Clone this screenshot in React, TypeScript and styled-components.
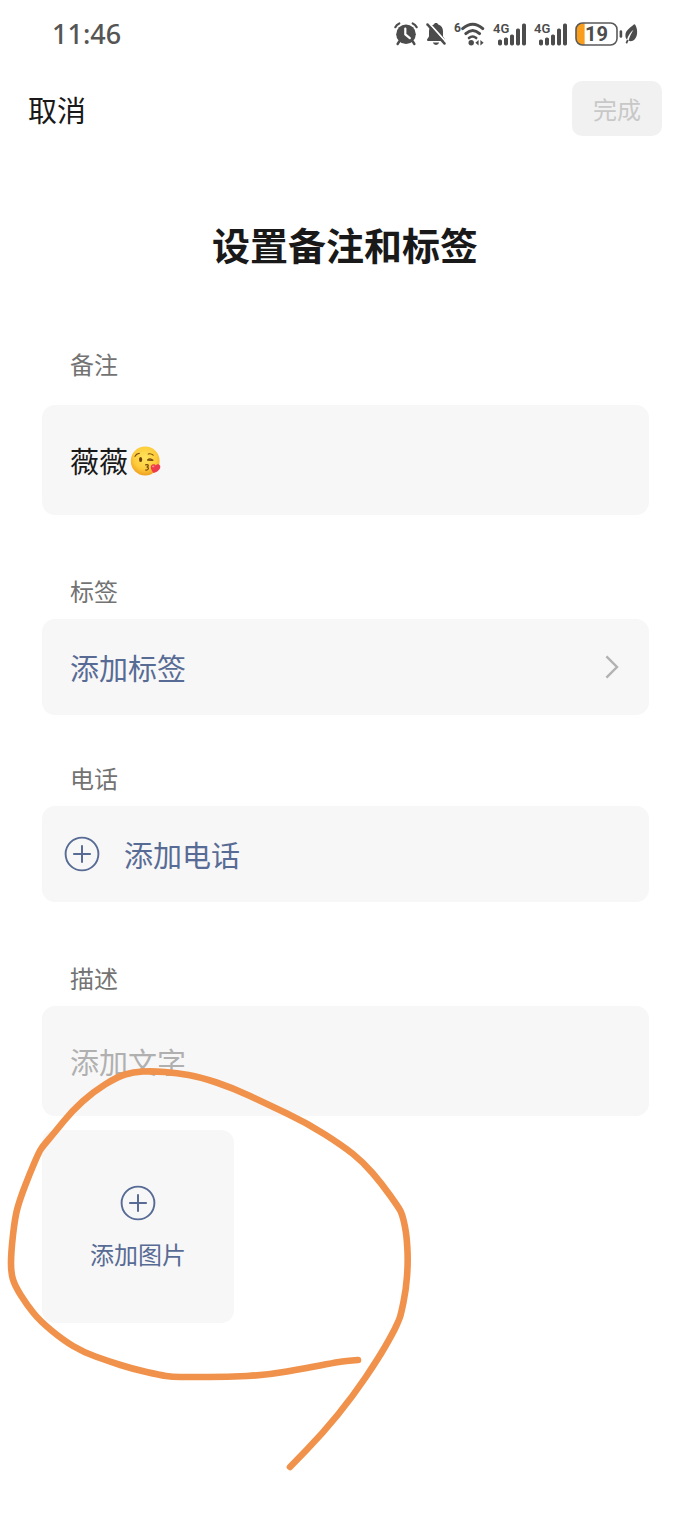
import React, { useState } from 'react';
import styled, { createGlobalStyle } from 'styled-components';

const GlobalStyle = createGlobalStyle`
  *, *::before, *::after { box-sizing: border-box; }
  body { margin: 0; background: #fff; }
  button, input { font: inherit; color: inherit; }
`;

const ink = '#4c4c4c';
const blue = '#576b95';

const Page = styled.div`
  position: relative;
  min-height: 100vh;
  overflow: hidden;
  background: #fff;
  color: #191919;
  font-family: 'Noto Sans CJK SC', sans-serif;
  font-size: 29px;
  line-height: 40px;
`;

const StatusBar = styled.div`
  display: flex;
  align-items: center;
  justify-content: space-between;
  height: 68px;
  padding: 0 52px;
  color: #555;
`;

const Clock = styled.time`
  font-family: 'Noto Sans', sans-serif;
  font-size: 27px;
  font-weight: 500;
`;

const StatusIcons = styled.div`
  display: flex;
  align-items: center;
  gap: 8px;

  svg { display: block; overflow: visible; }
`;

const Power = styled.div`
  display: flex;
  align-items: center;
  gap: 1px;
`;

const NavBar = styled.header`
  display: flex;
  align-items: center;
  justify-content: space-between;
  padding: 13px 28px;
`;

const CancelButton = styled.button`
  padding: 0;
  border: 0;
  background: none;
`;

const DoneButton = styled.button`
  width: 90px;
  height: 55px;
  padding: 0;
  border: 0;
  border-radius: 10px;
  background: #f1f1f1;
  color: #c8c8c8;
  font-size: 24px;
`;

const Title = styled.h1`
  margin: 67px 0 74px;
  font-size: 38px;
  font-weight: 700;
  line-height: 56px;
  text-align: center;
`;

const Form = styled.form`
  padding: 0 41px 0 42px;
`;

const Group = styled.section<{ $after?: number }>`
  margin-bottom: ${(p) => p.$after ?? 0}px;
`;

const Label = styled.label<{ $gap?: number }>`
  display: block;
  margin: 0 28px ${(p) => p.$gap ?? 10}px;
  color: #737373;
  font-size: 24px;
  line-height: 36px;
`;

const Field = styled.div`
  display: flex;
  align-items: center;
  gap: 2px;
  height: 110px;
  padding: 0 28px;
  border-radius: 13px;
  background: #f7f7f7;
`;

const TextInput = styled.input<{ $fit?: boolean }>`
  ${(p) => (p.$fit ? 'field-sizing: content;' : 'flex: 1; min-width: 0;')}
  height: 44px;
  padding: 0;
  border: 0;
  outline: 0;
  background: none;

  &::placeholder { color: #b0b0b0; opacity: 1; }
`;

const RowButton = styled.button<{ $split?: boolean }>`
  display: flex;
  align-items: center;
  justify-content: ${(p) => (p.$split ? 'space-between' : 'flex-start')};
  gap: 24px;
  width: 100%;
  height: 96px;
  padding: ${(p) => (p.$split ? '0 28px' : '0 22px')};
  border: 0;
  border-radius: 13px;
  background: #f7f7f7;
  color: ${blue};
`;

const ImageTile = styled.button`
  display: flex;
  flex-direction: column;
  align-items: center;
  justify-content: center;
  gap: 15px;
  width: 192px;
  height: 193px;
  margin-top: 14px;
  padding: 4px 0 0;
  border: 0;
  border-radius: 13px;
  background: #f7f7f7;
  color: ${blue};
  font-size: 24px;
  line-height: 36px;
`;

const Ink = styled.svg`
  position: absolute;
  top: 0;
  left: 0;
  pointer-events: none;
`;

const AlarmIcon = () => (
  <svg width="24" height="24" viewBox="0 0 24 24" fill="none" strokeLinecap="round">
    <path d="M1.3 5.2Q2.6 2.5 5.3 1.4M22.7 5.2Q21.4 2.5 18.7 1.4" stroke={ink} strokeWidth="2.2" />
    <path d="M5.2 19.5L3.6 22M18.8 19.5L20.4 22" stroke={ink} strokeWidth="2.4" />
    <circle cx="12" cy="12.2" r="9.8" fill={ink} />
    <path d="M11.3 6.6V12.4L15.8 16.2" stroke="#fff" strokeWidth="2.2" strokeLinejoin="round" />
  </svg>
);

const MutedBellIcon = () => (
  <svg width="20" height="24" viewBox="0 0 20 24" fill="none" strokeLinecap="round">
    <path
      d="M10 1C11.2 1 12 1.7 12.2 2.6C15.4 3.6 17 6.2 17 9.3V14.5L19 17.5Q19.3 19 17.8 19H2.2Q.7 19 1 17.5L3 14.5V9.3C3 6.2 4.6 3.6 7.8 2.6C8 1.7 8.8 1 10 1Z"
      fill={ink}
    />
    <path d="M6.8 20.6H13.2Q12.4 23 10 23Q7.6 23 6.8 20.6Z" fill={ink} />
    <path d="M3.2 1.4L20.4 20.4" stroke="#fff" strokeWidth="2" />
    <path d="M1.4 2.4L18.6 21.6" stroke={ink} strokeWidth="2.4" />
  </svg>
);

const WifiIcon = () => (
  <svg width="31" height="26" viewBox="0 0 31 26" fill="none" strokeLinecap="round">
    <text x="0" y="11" fill={ink} fontFamily="Roboto, sans-serif" fontSize="12" fontWeight="700">6</text>
    <path d="M8.6 7.6Q18.7 -1.2 28.8 7.6" stroke={ink} strokeWidth="3" />
    <path d="M11.8 12.6Q18.7 6.4 25.6 12.6" stroke={ink} strokeWidth="3" />
    <path d="M15 17Q18.6 14 22.2 17" stroke={ink} strokeWidth="2.6" />
    <circle cx="17.2" cy="21.8" r="2.7" fill={ink} />
    <path d="M24.6 19V24.6L21.4 21.8ZM26.4 19V24.6L29.6 21.8Z" fill={ink} />
  </svg>
);

const SignalIcon = () => (
  <svg width="33" height="24" viewBox="0 0 33 24">
    <text x="0" y="10.5" fill={ink} fontFamily="Roboto, sans-serif" fontSize="13" fontWeight="600">4G</text>
    {[17.4, 15.4, 12.4, 6.6, 1.6].map((top, i) => (
      <rect key={top} x={5 + i * 6} y={top} width="4" height={23.4 - top} rx="1.6" fill={ink} />
    ))}
  </svg>
);

const BatteryIcon = () => (
  <svg width="48" height="24" viewBox="0 0 48 24">
    <path d="M9.6 1V23H7.5Q1 23 1 16.5V7.5Q1 1 7.5 1Z" fill="#f99d1c" />
    <rect x="1" y="1" width="41" height="22" rx="6.5" fill="none" stroke="#5a5a5a" strokeWidth="1.6" />
    <rect x="44.6" y="8.3" width="2.6" height="7.4" rx="1.3" fill={ink} />
    <text x="21.5" y="19" fill={ink} fontFamily="Roboto, sans-serif" fontSize="20" fontWeight="700" textAnchor="middle">19</text>
  </svg>
);

const LeafIcon = () => (
  <svg width="14" height="22" viewBox="0 0 14 22" fill={ink}>
    <path d="M9.8 1.6C6.4 5 1.4 7 1.4 12.4C1.4 14.2 2 15.6 3 16.6C4 12.6 6.4 9.4 9.4 6.8C7.6 10 5.6 13.2 4.6 17.6C6.4 18.6 9 18.2 10.8 16.2C14.4 12 13.4 5.4 11.2 1.8Q10.6 .8 9.8 1.6Z" />
    <path d="M3 16.6L4.6 17.6L3.2 20.4Q2.2 21 1.6 19.8Z" />
  </svg>
);

const PlusCircle = () => (
  <svg width="36" height="36" viewBox="0 0 36 36" fill="none" stroke={blue} aria-hidden="true">
    <circle cx="18" cy="18" r="16.4" strokeWidth="1.9" />
    <path d="M18 9.2V26.8M9.2 18H26.8" strokeWidth="2" />
  </svg>
);

const Chevron = () => (
  <svg width="16" height="24" viewBox="0 0 16 24" fill="none" aria-hidden="true">
    <path d="M1.4 1.4L12 12L1.4 22.6" stroke="#b2b2b2" strokeWidth="2.4" />
  </svg>
);

const KissEmoji = () => (
  <svg width="32" height="32" viewBox="0 0 32 32" role="img" aria-label="😘">
    <defs>
      <radialGradient id="face" cx="50%" cy="38%" r="62%">
        <stop offset="0" stopColor="#ffe45c" />
        <stop offset=".65" stopColor="#fdcb3b" />
        <stop offset="1" stopColor="#f0a01f" />
      </radialGradient>
    </defs>
    <circle cx="15.2" cy="17" r="14.4" fill="url(#face)" />
    <ellipse cx="10.6" cy="15.4" rx="1.6" ry="2.5" fill="#6b3d0c" />
    <g fill="none" stroke="#7a480f" strokeLinecap="round">
      <path d="M5 12.4Q6.2 9.6 9.4 9.2" strokeWidth="1.1" />
      <path d="M18.2 10Q21 9.2 23.2 11.2" strokeWidth="1.1" />
      <path d="M17.6 16Q20 13.6 23 16.2M18 16.2L22.4 16.4" strokeWidth="1.2" />
      <path d="M15.6 20.8C18.8 20 19.2 22.4 16.6 23C19.4 23.2 19 26.4 15.6 26" strokeWidth="1.2" />
    </g>
    <path
      d="M23.6 29C21.6 26.6 20 24.2 21 21.8C22 19.8 24.6 19.6 25.8 21.6C27 19.8 29.4 20 30.2 22C31 25 27.4 28 23.6 29Z"
      fill="#ed3b4b"
    />
    <ellipse cx="23.2" cy="22.4" rx="1.2" ry=".9" fill="#ff8590" />
  </svg>
);

const strokePoints: [number, number][] = [
  [358, 1360], [345, 1361], [333, 1363], [307, 1368], [267, 1375], [227, 1377], [190, 1377],
  [172, 1377], [160, 1375], [133, 1369], [108, 1361], [83, 1352], [63, 1340], [40, 1321],
  [27, 1305], [15, 1286], [11, 1273], [11, 1253], [15, 1217], [20, 1199], [30, 1173],
  [39, 1152], [43, 1146], [55, 1132], [72, 1111], [93, 1092], [117, 1077], [133, 1072],
  [153, 1071], [177, 1073], [200, 1077], [233, 1088], [267, 1104], [307, 1123], [343, 1146],
  [363, 1162], [382, 1184], [399, 1208], [402, 1214], [405, 1226], [407, 1240], [408, 1263],
  [406, 1290], [401, 1314], [399, 1320], [393, 1333], [378, 1359], [353, 1396], [323, 1433],
  [290, 1467],
];

// Joins the points through their midpoints, so the pen line bends softly.
const smoothPath = (pts: [number, number][]) => {
  const mids = pts.slice(1, -1).map(([x, y], i) => {
    const [nx, ny] = pts[i + 2];
    return `Q${x} ${y} ${(x + nx) / 2} ${(y + ny) / 2}`;
  });
  return `M${pts[0].join(' ')}${mids.join('')}L${pts[pts.length - 1].join(' ')}`;
};

export default function App() {
  const [remark, setRemark] = useState('薇薇');
  const [note, setNote] = useState('');

  return (
    <Page>
      <GlobalStyle />
      <StatusBar>
        <Clock>11:46</Clock>
        <StatusIcons>
          <AlarmIcon />
          <MutedBellIcon />
          <WifiIcon />
          <SignalIcon />
          <SignalIcon />
          <Power>
            <BatteryIcon />
            <LeafIcon />
          </Power>
        </StatusIcons>
      </StatusBar>
      <NavBar>
        <CancelButton type="button">取消</CancelButton>
        <DoneButton type="submit" form="contact" disabled>完成</DoneButton>
      </NavBar>
      <Title>设置备注和标签</Title>
      <Form id="contact">
        <Group $after={58}>
          <Label $gap={23} htmlFor="remark">备注</Label>
          <Field>
            <TextInput $fit id="remark" value={remark} onChange={(e) => setRemark(e.target.value)} />
            <KissEmoji />
          </Field>
        </Group>
        <Group $after={45}>
          <Label htmlFor="tags">标签</Label>
          <RowButton $split id="tags" type="button">
            添加标签
            <Chevron />
          </RowButton>
        </Group>
        <Group $after={58}>
          <Label htmlFor="phone">电话</Label>
          <RowButton id="phone" type="button">
            <PlusCircle />
            添加电话
          </RowButton>
        </Group>
        <Group>
          <Label htmlFor="note">描述</Label>
          <Field>
            <TextInput id="note" placeholder="添加文字" value={note} onChange={(e) => setNote(e.target.value)} />
          </Field>
          <ImageTile type="button">
            <PlusCircle />
            添加图片
          </ImageTile>
        </Group>
      </Form>
      <Ink width="420" height="1480" viewBox="0 0 420 1480" fill="none" aria-hidden="true">
        <path d={smoothPath(strokePoints)} stroke="#f0924b" strokeWidth="6.6" strokeLinecap="round" strokeLinejoin="round" />
      </Ink>
    </Page>
  );
}
